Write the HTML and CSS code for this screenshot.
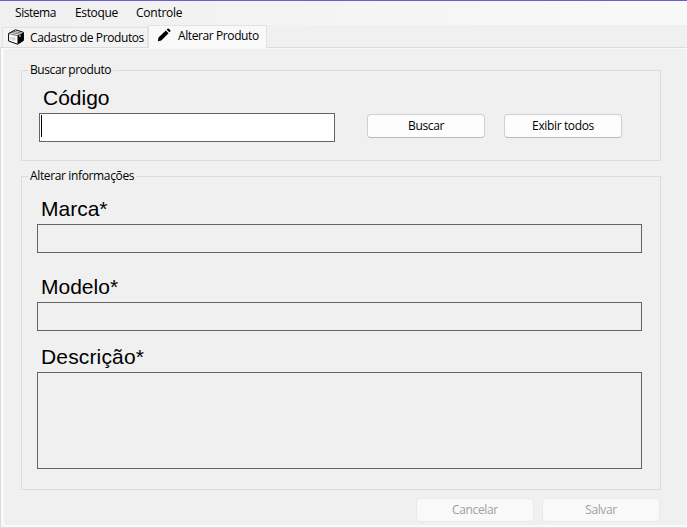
FILE: index.html
```html
<!DOCTYPE html>
<html lang="pt-BR">
<head>
<meta charset="utf-8">
<title>Alterar Produto</title>
<link rel="stylesheet" href="styles.css">
</head>
<body>
<div class="window">
  <nav class="menu"><span class="m1">Sistema</span><span class="m2">Estoque</span><span class="m3">Controle</span></nav>
  <div class="tabs">
    <div class="tab">
      <svg class="box-icon" viewBox="0 0 16 16" width="16" height="16"><path d="M.6 4.5 7.5.8l7.9 2.5v8.2L9.6 15.2.6 12z" fill="#fff" stroke="#000"/><path d="M9.5 6.5 15.5 3.5v8.1l-6 3.7z"/><path d="M.6 4.5l8.9 2.2M3.2 3.3l8.4 2M5.4 2.2l8.2 2" fill="none" stroke="#222" stroke-width=".7"/><path d="M3 8v2.6M5 7.7v4M6.8 8.3v3.5" fill="none" stroke="#aaa" stroke-width=".8"/><path d="M11.5 6v2.2l1-.5V5.5z" fill="#fff"/></svg>
      <span class="t1">Cadastro de Produtos</span>
    </div>
    <div class="tab active">
      <svg class="pencil-icon" viewBox="0 0 14 14" width="14" height="14"><path d="M.8 13.2l.7-3.6 7.3-7.2 2.8 2.8-7.3 7.2zM9.7 1.7l.9-.9q.6-.5 1.2 0l1.5 1.5q.5.5 0 1.1l-.9.9z"/></svg>
      <span class="t2">Alterar Produto</span>
    </div>
  </div>
  <main class="panel">
    <section class="group search">
      <h2 class="legend l1">Buscar produto</h2>
      <label class="label">Código</label>
      <div class="row">
        <div class="field code"><i class="caret"></i></div>
        <button class="button"><span class="b1">Buscar</span></button>
        <button class="button all"><span class="b2">Exibir todos</span></button>
      </div>
    </section>
    <section class="group info">
      <h2 class="legend l2">Alterar informações</h2>
      <label class="label">Marca*</label>
      <div class="field"></div>
      <label class="label model">Modelo*</label>
      <div class="field"></div>
      <label class="label desc">Descrição*</label>
      <div class="field area"></div>
    </section>
    <div class="actions">
      <button class="button" disabled><span class="b3">Cancelar</span></button>
      <button class="button" disabled><span class="b4">Salvar</span></button>
    </div>
  </main>
</div>
</body>
</html>
```
FILE: styles.css
```css
* { box-sizing: border-box; }
body { margin: 0; background: #f0f0f0; color: #000; font: 12px/16px "Open Sans", "Noto Sans", sans-serif; }
.window { width: 687px; height: 528px; overflow: hidden; border-top: 1px solid #6a5fce; display: flex; flex-direction: column; }
.menu { height: 24px; flex: none; display: flex; padding: 4px 0 0 15px; background: linear-gradient(90deg, #f0f0f0, #f9f9f9); }
.menu span { white-space: nowrap; }
.m1 { width: 60px; letter-spacing: -.45px; }
.m2 { width: 61px; letter-spacing: -.35px; }
.m3 { letter-spacing: -.25px; }
.tabs { height: 22px; flex: none; display: flex; align-items: flex-end; padding-left: 2px; background: #f0f0f0; }
.tab { width: 146px; height: 20px; display: flex; align-items: flex-start; padding: 1px 0 0 5px; border: 1px solid #e2e2e2; border-bottom: 0; background: #f3f3f3; white-space: nowrap; }
.tab span { margin-top: 1px; }
.tab svg { flex: none; }
.box-icon { margin-right: 6px; }
.active { width: 119px; height: 23px; padding: 1px 0 0 8px; background: #f9f9f9; z-index: 1; margin-bottom: -1px; }
.pencil-icon { margin: 1px 7px 0 0; }
.t1 { letter-spacing: -.4px; }
.t2 { letter-spacing: -.4px; }
.panel { flex: 1; border: 1px solid #dcdcdc; border-right: 0; box-shadow: inset 3px 1px #f9f9f9, inset -1px -2px #f9f9f9; padding: 22px 27px 0 20px; }
.group { border: 1px solid #dcdcdc; width: 640px; }
.search { height: 91px; padding-left: 17px; }
.info { height: 314px; margin-top: 15px; padding-left: 15px; }
.legend { width: max-content; height: 16px; margin: -9px 0 0; padding: 0 2px; background: #f0f0f0; font: inherit; white-space: nowrap; }
.search .legend { margin-left: -11px; }
.info .legend { margin-left: -9px; }
.l1 { letter-spacing: -.42px; }
.l2 { letter-spacing: -.36px; }
.label { display: block; height: 25px; margin-top: 8px; padding-left: 4px; font: 21px/24px "Liberation Sans", sans-serif; }
.info .label { margin-top: 13px; height: 27px; padding-left: 4px; }
.info .model { margin-top: 22px; height: 27px; }
.info .desc { margin-top: 14px; height: 27px; letter-spacing: .15px; }
.field { width: 605px; height: 29px; border: 1px solid #646464; }
.area { height: 97px; }
.row { display: flex; margin-top: 2px; }
.code { width: 296px; background: #fff; padding: 1px; }
.caret { display: block; width: 1px; height: 22px; background: #000; }
.button { width: 118px; height: 24px; margin: 1px 0 0 32px; padding: 0 0 1px; border: 1px solid #d0d0d0; border-bottom-color: #bababa; border-radius: 4px; background: #fdfdfd; color: #000; font: inherit; }
.all { margin-left: 19px; }
.actions { display: flex; justify-content: flex-end; gap: 8px; margin-top: 8px; }
.actions .button { margin: 0; border-color: #e9e9e9; background: #f9f9f9; color: #a0a0a0; }
.b1, .b2, .b3, .b4 { letter-spacing: -.36px; }
```
